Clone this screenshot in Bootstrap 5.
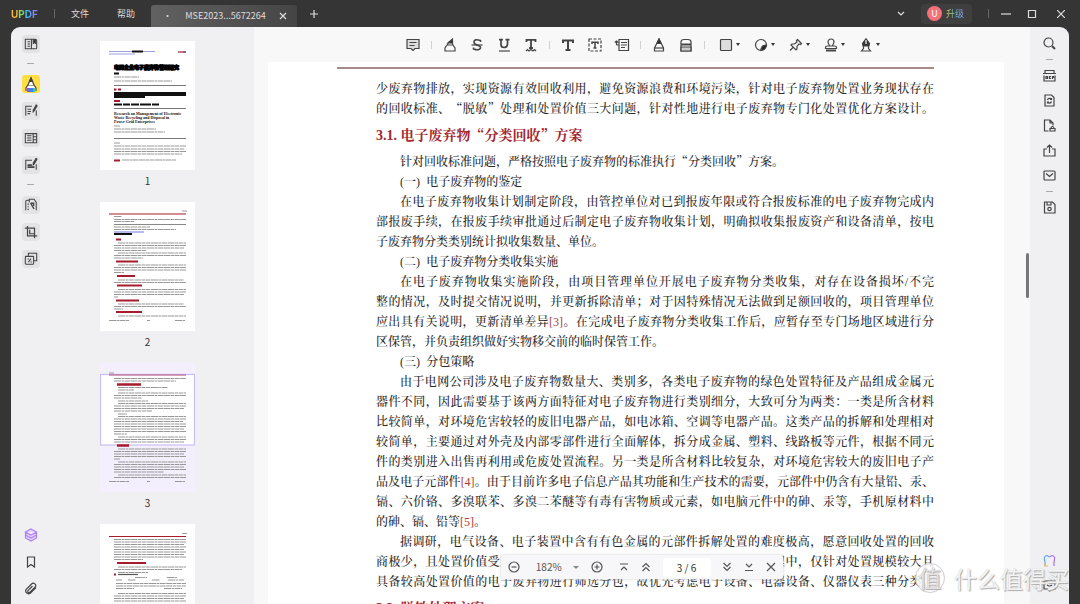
<!DOCTYPE html>
<html lang="zh-CN">
<head>
<meta charset="utf-8">
<meta name="viewport" content="width=device-width, initial-scale=1">
<title>UPDF</title>
<link href="https://cdn.jsdelivr.net/npm/bootstrap@5.3.0/dist/css/bootstrap.min.css" rel="stylesheet">
<script src="https://cdn.jsdelivr.net/npm/bootstrap@5.3.0/dist/js/bootstrap.bundle.min.js" defer></script>
<style>
body{height:100vh;background:#363536;font:9px/14px "Noto Sans CJK SC",sans-serif;color:#444;overflow:hidden}
button{background:none;border:0;padding:0;color:inherit;display:flex;align-items:center;justify-content:center;flex:none}
svg{display:block;flex:none;fill:none;stroke:currentColor;stroke-width:1.2}
.topbar{height:27px;color:#ddd;padding-left:11px;padding-right:11px}
.brand{font:bold 10px/14px Inter,sans-serif;background:linear-gradient(90deg,#ffb73a 15%,#7ed957 38%,#45b8f5 60%,#a06bf5);-webkit-background-clip:text;background-clip:text;color:transparent;text-decoration:none}
.vline{width:1px;height:9px;background:#666}
.doc-tab{width:146px;height:22px;background:linear-gradient(90deg,#626162,#464546);border-radius:3px 3px 0 0;padding:0 10px 0 12px}
.upgrade{background:#403f40;border-radius:4px;height:20px;padding:0 8px 0 6px;gap:4px}
.avatar-dot{width:15px;height:15px;border-radius:50%;background:#f4717a;color:#fff;line-height:15px}
.upgrade-label{background:linear-gradient(90deg,#e2c65a,#69c9b3 45%,#5fb4f5 70%,#b69bf5);-webkit-background-clip:text;background-clip:text;color:transparent}
.shell{margin:0 11px;background:#f0eff1;border-radius:9px 9px 0 0;min-height:0}
.rail{width:39px;padding-top:3px;padding-bottom:2px}
.rail button{width:27px;height:27px}
.rail hr{width:7px;margin:6px 0;border-top:1px solid #aaa;opacity:1;height:0}
.tile{background:#e3e2e4;border-radius:4px;padding:2px}
.tile-on{background:#ffdf43;border-radius:3px}
.rail-r button{height:25px}
.rail-r{padding-top:4px}
.rail-r hr{margin:3px 0}
.thumbs{width:204px;padding:14px 0 0 50px;overflow:hidden}
.thumbs figure{width:95px;margin:0}
.thumbs figcaption{height:32px;line-height:22px;font-size:10px;text-align:center;color:#333}
.thumbs svg{background:#fff;width:95px;height:129px}
.row-text{stroke:#999;stroke-width:1;stroke-dasharray:7 .5 3 .5 5 .5}
.ink{stroke:#111}.red{stroke:#a51d2d}
.viewer{background:#f8f8f8;min-width:0}
.tools{height:35px;color:#444}
.tools button{width:27px;height:27px}
.tools .drop{width:35px;gap:3px;padding-left:5px}
.tools .drop::after{content:"";border:2px solid transparent;border-top:3px solid #333;border-bottom:0}
.tools i{width:10px;height:8px;background:linear-gradient(#d2d2d2,#d2d2d2) center/1px 8px no-repeat}
.sheet{background:#fff;margin:0 26px 0 14px;padding:5px 70px 0 69px;overflow:hidden;min-height:0;color:#2a2a2a}
.sheet header{border-top:2px solid #a98a8a;margin-bottom:9px}
.prose{margin-left:39px;font:500 12px/20px "Noto Serif CJK SC","Noto Sans CJK SC",serif}
.prose p{margin:0}
.prose p span{display:block;text-align:justify;text-align-last:justify}
.prose .ind{padding-left:24px}
.prose p .end{text-align-last:left}
.prose h2{font:bold 14px/20px "Noto Serif CJK SC","Noto Sans CJK SC",serif;color:#a3272f;margin:6px 0 7px}
.prose b,.prose a{font-family:"Liberation Serif",serif;text-decoration:none;line-height:1}
.prose p b{font-weight:400}
.prose a{color:#b13a3a}
.thumb-scroll{right:1px;top:226px;width:3px;height:45px;border-radius:2px;background:#777}
.pager{left:50%;bottom:25px;transform:translateX(-50%);width:282px;height:24px;background:#f7f6f8;border-radius:3px;box-shadow:0 0 3px #ccc;padding:0 7px;color:#555;font-size:10px}
.pager input{width:48px;height:19px;border:0;border-radius:3px;background:#fff;text-align:center;font-size:10px;color:#333;padding:0}
.caret{border:3px solid transparent;border-top:3px solid #888;border-bottom:0}
.mark-wm{right:11px;bottom:9px;gap:9px;color:rgba(255,255,255,.85);font-size:23px;line-height:34px;text-shadow:1px 1px 1px #aaa,0 0 1px #bbb;pointer-events:none}
.mark-wm span:first-child{width:30px;height:30px;border-radius:50%;border:1px solid #ccc;background:rgba(255,255,255,.8);line-height:27px;text-align:center;color:#e4e0e2}
</style>
</head>
<body class="d-flex flex-column">
<nav class="topbar d-flex align-items-center flex-shrink-0">
  <a class="brand" href="#">UPDF</a><span class="vline ms-3"></span>
  <button class="ms-3">文件</button><button class="ms-4 ps-1">帮助</button>
  <div class="doc-tab d-flex align-items-center justify-content-between align-self-end ms-3"><span>•</span><span>MSE2023...5672264</span>
    <button aria-label="关闭标签"><svg width="8" height="8" viewBox="0 0 8 8" stroke-width="1"><path d="M1 1l6 6M7 1L1 7"/></svg></button></div>
  <button class="ms-2 ps-1" aria-label="新建标签"><svg width="10" height="10" viewBox="0 0 10 10"><path d="M5 1v8M1 5h8"/></svg></button>
  <div class="d-flex align-items-center ms-auto">
    <button class="me-3" aria-label="标签列表"><svg width="8" height="8" viewBox="0 0 8 8"><path d="M1 2l3 3 3-3"/></svg></button>
    <button class="upgrade"><span class="avatar-dot">U</span><span class="upgrade-label">升级</span></button>
    <span class="vline ms-3 me-2"></span>
    <button class="ms-1" aria-label="最小化"><svg width="10" height="10" viewBox="0 0 10 10"><path d="M0 5h10"/></svg></button>
    <button class="ms-3" aria-label="最大化"><svg width="10" height="10" viewBox="0 0 10 10"><path d="M1.500 1.500h7v7h-7z"/></svg></button>
    <button class="ms-3 ps-1 me-1" aria-label="关闭"><svg width="8" height="8" viewBox="0 0 8 8"><path d="M0 0l8 8M8 0L0 8"/></svg></button>
  </div>
</nav>
<main class="shell d-flex flex-grow-1">
  <aside class="rail d-flex flex-column align-items-center flex-shrink-0">
    <button aria-label="阅读"><svg class="tile" width="18" height="18" viewBox="0 0 16 16"><path d="M1.500 2.500h11q2 0 2 2v8q0 1-1 1h-12zM4 5.500h3M4 8h3M4 10.500h3M8.500 3v10"/><path d="M10.500 2.500v5l1.500-1 1.500 1v-5" fill="#333"/></svg></button>
    <hr>
    <button aria-label="注释"><svg class="tile-on" width="18" height="18" viewBox="0 0 18 18"><path d="M4 16v-3l2-3h6l2 3v3" fill="#fff"/><path d="M6 10l3-7 3 7" fill="#fff"/><path d="M7.500 6.500L9 3l1.500 3.500z" fill="#333"/><path d="M5 13h2v4H5z" fill="#a44de0" stroke="none"/><path d="M7 13h4v4H7z" fill="#3585ee" stroke="none"/><path d="M11 13h2v4h-2z" fill="#39c6a2" stroke="none"/></svg></button>
    <button aria-label="编辑"><svg class="tile" width="18" height="18" viewBox="0 0 16 16"><path d="M14 7v6.500M9 2.500H2v11M4 6h4M4 8.500h4M4 11h3"/><path d="M10.500 9V7L14 1l1 1-3.500 6z" fill="#333"/></svg></button>
    <button aria-label="页面"><svg class="tile" width="18" height="18" viewBox="0 0 16 16"><path d="M1.500 3h9v10.500h-9zM10.500 3h4v10.500h-4M3.500 5.500h5M3.500 8h5M3.500 10.500h5M10.500 6.500h4M10.500 10h4"/></svg></button>
    <button aria-label="表单"><svg class="tile" width="18" height="18" viewBox="0 0 16 16"><path d="M14 7v6.500M9 2.500H2v11"/><path d="M4 10.500h8M4 8h5" stroke-width="2"/><path d="M10.500 8V6L14 0l1 1-3.500 6z" fill="#333"/></svg></button>
    <hr>
    <button aria-label="转换"><svg class="tile" width="18" height="18" viewBox="0 0 16 16"><path d="M2 14V4q0-1.500 1.500-1.500H6M6 5V1.500h5.500L14 5v9M4 7h1.500M4 10h1.500M4 13h1.500"/><path d="M7.500 6H11v3M7.500 6l4 6.500" stroke-width="1.600"/></svg></button>
    <button aria-label="裁剪"><svg class="tile" width="18" height="18" viewBox="0 0 16 16"><path d="M1 3.500h11V15M4 1v11.500h11M6.500 5.500v4.500H12" stroke-width="1.400"/></svg></button>
    <button aria-label="批处理"><svg class="tile" width="18" height="18" viewBox="0 0 16 16"><path d="M5 5V1.500h9.500V10H11"/><rect x="1.500" y="5" width="9.500" height="9" rx="1"/><path d="M4 8h1.500M5 11.500l3-4M7.500 11.500H9"/></svg></button>
    <button class="mt-auto" aria-label="图层"><svg style="color:#ac84ee" width="14" height="14" viewBox="0 0 14 14"><path d="M7 1l5.500 3L7 7 1.500 4zM1.500 4v3L7 10l5.500-3V4M1.500 7v3L7 13l5.500-3V7" fill="#e2d3ff"/></svg></button>
    <button aria-label="书签"><svg width="12" height="12" viewBox="0 0 12 12"><path d="M2.500 1h7v10L6 8.500 2.500 11z"/></svg></button>
    <button aria-label="附件"><svg width="14" height="14" viewBox="0 0 14 14"><path d="M12 5.500l-6 6a3 3 0 01-4-4l5.500-5.500a2.300 2.300 0 013.500 3.200l-5 5a1.200 1.200 0 01-2-1.500L8.500 4"/></svg></button>
  </aside>
  <aside class="thumbs flex-shrink-0">
    <figure><svg viewBox="0 0 95 129">
      <path d="M9 10.500h46M9 13h26" stroke="#9ba0dd"/><path class="ink" d="M32 10.500h11" stroke-width="2"/><path class="red" d="M78 11h5"/><path class="ink" d="M83 11h3"/>
      <text x="14" y="28" font-size="5" font-weight="900" fill="#000" stroke="#000" stroke-width="1" font-family="Noto Sans CJK SC">电网企业电子废弃物管理研究</text>
      <path class="ink" stroke-width="2" d="M14 32.500h5M14 63.500h8m1 0h7m1 0h8m1 0h11m1 0h7"/><path class="row-text" d="M14 36h25M14 40h58M14 85h6M14 88h42M14 91h51M14 105h72M14 108h70M14 110.500h72M14 113h68M22 119h54M14 102h6"/>
      <path d="M14 44.500h72M14 67.500h72M14 97.500h72" stroke="#777"/><path class="red" stroke-width="2" d="M14 48.500h2.500m1.500 0h3M14 60h6M14 119.500h6"/><path class="ink" d="M14 53h72" stroke-width="4"/><path class="ink" d="M14 56h31" stroke-width="2"/>
      <g font-family="Liberation Serif" font-weight="bold" font-size="4" fill="#111" stroke="none"><text x="14" y="73.500">Research on Management of Electronic</text><text x="14" y="77.500">Waste Recycling and Disposal in</text><text x="14" y="81.500">Power Grid Enterprises</text></g>
    </svg><figcaption>1</figcaption></figure>
    <figure><svg viewBox="0 0 95 129">
      <path class="red" d="M9 12h77"/><path class="row-text" d="M82 9h5M14 14.500h8M14 17.500h72M14 19.500h20M14 25h36M14 27.500h62M18 41h68M14 43.500h72M14 46h70M14 48.500h32M18 51h68M14 53.500h72M14 56h29M18 63h68M14 65.500h72M14 68h72M14 70.500h10M18 78h66M14 80.500h72M18 87.500h68M14 90h72M14 92.500h70M14 95h4M18 102h66M14 104.500h72M14 107h9M18 114h68M9 118.500h20m18 0h3m25 0h10"/>
      <path d="M14 22.500h72" stroke="#888"/><path d="M14 30h30" stroke="#8d8de0"/><path class="ink" d="M14 32h18" stroke-width="2"/><path class="red" stroke-width="2" d="M16 37.500h5M16 59.500h22M17 74h18M17 83.500h25M16 98.500h23M16 110h26"/>
    </svg><figcaption>2</figcaption></figure>
    <figure><svg viewBox="0 0 95 129"><rect width="95" height="129" fill="#f4effd" stroke="none"/><rect x=".5" y="11.500" width="94" height="70.500" fill="#fff" stroke="#c9bdf5"/>
      <path d="M9 12h77" stroke="#b34d76"/><path class="row-text" d="M9 10h5M14 15.500h72M14 18h62M18 24.500h50M18 27h16M18 30h68M14 32.500h72M14 35h28M18 38h30M18 40.500h68M14 43h72M14 45.500h70M14 48h38M18 51h9M18 53.500h68M14 56h72M14 58.500h69M14 61h72M14 63.500h72M14 66h70M14 68.500h72M14 71h13M18 74h68M14 76.500h72M14 79h70M18 86h68M14 88.500h72M14 91h70M14 93.500h72M14 96h6M18 99h68M14 101.500h72M14 104h70M14 106.500h72M14 109h50M18 112h68M14 114.500h72M9 118.500h20m18 0h3m25 0h10"/><path class="red" stroke-width="2.500" d="M17 21.500h24M17 82.500h12"/>
    </svg><figcaption>3</figcaption></figure>
    <figure><svg viewBox="0 0 95 129"><path class="red" d="M9 12.500h77"/><path class="row-text" d="M82 9.500h5M14 15.500h72M14 18h72M14 20.500h70M14 23h72M14 25.500h70M14 28h72M14 30.500h70M14 33h72M14 35.500h29M18 43h68M14 45.500h68M18 48.500h30M35 53.500h12m20 0h10M16 56h6m6 0h8m16 0h8m8 0h16M16 59.500h70M16 62h70M16 64.500h18m30 0h18M18 69.500h68M14 72h72M14 74.500h70M14 77h72"/><path class="red" stroke-width="2" d="M17 39h29M14 50.500h2"/><path d="M18 50.500h20" stroke="#555"/></svg></figure>
  </aside>
  <section class="viewer position-relative d-flex flex-column flex-grow-1">
    <div class="tools d-flex align-items-center justify-content-center flex-shrink-0">
      <button aria-label="批注"><svg width="14" height="14" viewBox="0 0 14 14"><path d="M1 1.500h12v9H9L7 12.500 5 10.500H1z" fill="#ddd"/><path d="M3.500 4.500h7M3.500 7.500h5"/></svg></button><i></i>
      <button aria-label="高亮"><svg width="14" height="14" viewBox="0 0 14 14"><path d="M2 13v-3l2-3h6l2 3v3zM4 7l2-3h3l1 3"/><path d="M5 5l4.500-4v4z" fill="#222"/></svg></button>
      <button aria-label="删除线"><svg width="14" height="14" viewBox="0 0 14 14"><path d="M10.500 4V2.500Q4 .5 4 4q0 2 3 3 4 1 3.500 3-1 3-7 1V9.500" stroke-width="1.600"/><path d="M1.500 7h11"/></svg></button>
      <button aria-label="下划线"><svg width="14" height="14" viewBox="0 0 14 14"><path d="M2 1.700h4M8.500 1.700h4M4 2v4.500q0 3 3 3t3.500-3V2" stroke-width="1.700"/><path d="M2 13h11"/></svg></button>
      <button aria-label="波浪线"><svg width="14" height="14" viewBox="0 0 14 14"><path d="M2.500 4V1.800h9V4M7 2v8M5 10h4" stroke-width="1.800"/><path d="M2 13l1.500-1.500L5 13l2-1.500L9 13l1.500-1.500L12 13"/></svg></button><i></i>
      <button aria-label="文本"><svg width="14" height="14" viewBox="0 0 14 14"><path d="M2 5V2.500h10V5M7 2.500V12M4.500 12h5" stroke-width="2"/></svg></button>
      <button aria-label="文本框"><svg width="14" height="14" viewBox="0 0 14 14"><rect x="1" y="1" width="12" height="12" stroke-dasharray="3 1.500"/><path d="M4 6V4.300h6V6M7 4.500V10M5.500 10h3" stroke-width="1.500"/></svg></button>
      <button aria-label="标注"><svg width="16" height="14" viewBox="0 0 16 14"><path d="M5 1.500h9.500v11H5zM7 4.500h6M7 7h6M7 9.500h4M2.500 7V3M.8 4.500L2.500 3l1.700 1.500M2.500 7H5"/></svg></button><i></i>
      <button aria-label="铅笔"><svg width="14" height="14" viewBox="0 0 14 14"><path d="M2.500 13v-3L7 1l4.500 9v3z"/><path d="M5 5.500L7 1l2 4.500z" fill="#222"/><path d="M2.500 10h9"/></svg></button>
      <button aria-label="橡皮"><svg width="14" height="14" viewBox="0 0 14 14"><path d="M2 13V4q0-2.500 3-2.500h4Q12 1.500 12 4v9z"/><path d="M2 6.500h10" stroke-width="2"/><path d="M2 9h10v4H2z" fill="#ccc"/></svg></button><i></i>
      <button class="drop" aria-label="形状"><svg width="14" height="14" viewBox="0 0 14 14"><rect x="1.500" y="1.500" width="11" height="11" rx="1" fill="#ddd"/></svg></button>
      <button class="drop" aria-label="贴纸"><svg width="14" height="14" viewBox="0 0 14 14"><path d="M7 12.500A5.500 5.500 0 1112.500 7q-5 0-5.500 5.500z"/><path d="M7 12.500Q7.500 7 12.500 7q-.5 5-5.500 5.500z" fill="#222"/></svg></button>
      <button class="drop" aria-label="图钉"><svg width="14" height="14" viewBox="0 0 14 14"><path d="M8.500 1.500l4 4-1 1-1.500-.5-2 2.500v2.500l-1 1-5-5 1-1h2.500L8 4l-.5-1.500zM4 9.500L1 12.500"/></svg></button>
      <button class="drop" aria-label="图章"><svg width="14" height="14" viewBox="0 0 14 14"><path d="M5.500 7.500Q4 5 4 4a3 3 0 016 0q0 1-1.500 3.500M1.500 10.500v-1q0-1.500 2-1.500h7q2 0 2 1.500v1z"/><path d="M2 12.500h10" stroke-width="2"/></svg></button>
      <button class="drop" aria-label="签名"><svg width="14" height="14" viewBox="0 0 14 14"><path d="M4 8L3.500 5.500 7 .8l3.500 4.700L10 8z" fill="#333"/><path d="M7 2v4" stroke="#fff"/><path d="M4.500 8v2.500L2.500 13h9l-2-2.500V8"/></svg></button>
    </div>
    <article class="sheet flex-grow-1">
      <header></header>
      <div class="prose">
        <p><span>少废弃物排放，实现资源有效回收利用，避免资源浪费和环境污染，针对电子废弃物处置业务现状存在</span><span>的回收标准、“脱敏”处理和处置价值三大问题，针对性地进行电子废弃物专门化处置优化方案设计。</span></p>
        <h2><b>3.1.</b>&nbsp;电子废弃物“分类回收”方案</h2>
        <p><span class="ind end">针对回收标准问题，严格按照电子废弃物的标准执行“分类回收”方案。</span></p>
        <p><span class="ind end"><b>(</b>一<b>)</b>&nbsp; 电子废弃物的鉴定</span></p>
        <p><span class="ind">在电子废弃物收集计划制定阶段，由管控单位对已到报废年限或符合报废标准的电子废弃物完成内</span><span>部报废手续，在报废手续审批通过后制定电子废弃物收集计划，明确拟收集报废资产和设备清单，按电</span><span class="end">子废弃物分类类别统计拟收集数量、单位。</span></p>
        <p><span class="ind end"><b>(</b>二<b>)</b>&nbsp; 电子废弃物分类收集实施</span></p>
        <p><span class="ind">在电子废弃物收集实施阶段，由项目管理单位开展电子废弃物分类收集，对存在设备损坏<b>/</b>不完</span><span>整的情况，及时提交情况说明，并更新拆除清单；对于因特殊情况无法做到足额回收的，项目管理单位</span><span>应出具有关说明，更新清单差异<a href="#">[3]</a>。在完成电子废弃物分类收集工作后，应暂存至专门场地区域进行分</span><span class="end">区保管，并负责组织做好实物移交前的临时保管工作。</span></p>
        <p><span class="ind end"><b>(</b>三<b>)</b>&nbsp; 分包策略</span></p>
        <p><span class="ind">由于电网公司涉及电子废弃物数量大、类别多，各类电子废弃物的绿色处置特征及产品组成金属元</span><span>器件不同，因此需要基于该两方面特征对电子废弃物进行类别细分，大致可分为两类：一类是所含材料</span><span>比较简单，对环境危害较轻的废旧电器产品，如电冰箱、空调等电器产品。这类产品的拆解和处理相对</span><span>较简单，主要通过对外壳及内部零部件进行全面解体，拆分成金属、塑料、线路板等元件，根据不同元</span><span>件的类别进入出售再利用或危废处置流程。另一类是所含材料比较复杂，对环境危害较大的废旧电子产</span><span>品及电子元部件<a href="#">[4]</a>。由于目前许多电子信息产品其功能和生产技术的需要，元部件中仍含有大量铅、汞、</span><span>镉、六价铬、多溴联苯、多溴二苯醚等有毒有害物质或元素，如电脑元件中的砷、汞等，手机原材料中</span><span class="end">的砷、镉、铅等<a href="#">[5]</a>。</span></p>
        <p><span class="ind">据调研，电气设备、电子装置中含有有色金属的元部件拆解处置的难度极高，愿意回收处置的回收</span><span>商极少，且处置价值受到较大影响。因此在电子废弃物分类回收处置的过程中，仅针对处置规模较大且</span><span>具备较高处置价值的电子废弃物进行筛选分包，故优先考虑电子设备、电器设备、仪器仪表三种分类。</span></p>
        <h2><b>3.2.</b>&nbsp;脱敏处理方案</h2>
      </div>
    </article>
    <div class="thumb-scroll position-absolute"></div>
    <div class="pager position-absolute d-flex align-items-center justify-content-between">
      <button aria-label="缩小"><svg width="12" height="12" viewBox="0 0 12 12"><circle cx="6" cy="6" r="5"/><path d="M3.500 6h5"/></svg></button>
      <button class="ms-1">182%</button><span class="caret"></span>
      <button aria-label="放大"><svg width="12" height="12" viewBox="0 0 12 12"><circle cx="6" cy="6" r="5"/><path d="M3.500 6h5M6 3.500v5"/></svg></button>
      <button class="ms-1" aria-label="首页"><svg width="10" height="10" viewBox="0 0 10 10"><path d="M1 2h8M2 8l3-3 3 3"/></svg></button>
      <button aria-label="上一页"><svg width="10" height="10" viewBox="0 0 10 10"><path d="M1.500 5L5 1.500 8.500 5M1.500 9L5 5.500 8.500 9"/></svg></button>
      <input value="3 / 6" aria-label="页码">
      <button aria-label="下一页"><svg width="10" height="10" viewBox="0 0 10 10"><path d="M1.500 1L5 4.500 8.500 1M1.500 5L5 8.500 8.500 5"/></svg></button>
      <button aria-label="末页"><svg width="10" height="10" viewBox="0 0 10 10"><path d="M1 8.500h8M2 2l3 3 3-3"/></svg></button>
      <button aria-label="关闭工具条"><svg width="10" height="10" viewBox="0 0 10 10"><path d="M1 1l8 8M9 1L1 9"/></svg></button>
    </div>
  </section>
  <aside class="rail rail-r d-flex flex-column align-items-center flex-shrink-0">
    <button aria-label="搜索"><svg width="13" height="13" viewBox="0 0 13 13"><circle cx="5.500" cy="5.500" r="4.500"/><path d="M9 9l3 3" stroke-width="2"/></svg></button><hr>
    <button aria-label="OCR"><svg width="13" height="13" viewBox="0 0 13 13"><path d="M2 4V1.500h9V4M0 4.500h13M1 6.500V12h11V6.500M3 7.500h1.500v2H3zM8 7.500H6.500v2H8M9.500 10V7.500h1v1.500"/></svg></button>
    <button aria-label="转换文件"><svg width="13" height="13" viewBox="0 0 13 13"><path d="M2 1h6.500L11 3.500V12H2zM4.500 6a2.200 2.200 0 014-.5M8.500 7.500a2.200 2.200 0 01-4 .5M8.500 4v1.500H7M4.500 9.500V8H6"/></svg></button>
    <button aria-label="保护"><svg width="13" height="13" viewBox="0 0 13 13"><path d="M5.500 12H1.500V1H7l3 3v2.500M7 1v3h3M7 9.500h5V12H7zM8 9.500q0-2 1.500-2t1.500 2"/></svg></button>
    <button aria-label="分享"><svg width="13" height="13" viewBox="0 0 13 13"><path d="M4 5H1v7h11V5H9M6.500 9V1M4 3.500L6.500 1 9 3.500"/></svg></button>
    <button aria-label="邮件"><svg width="13" height="13" viewBox="0 0 13 13"><rect x="1" y="2" width="11" height="9" rx="1"/><path d="M3 4.500l3.500 3 3.500-3"/></svg></button><hr>
    <button aria-label="保存"><svg width="13" height="13" viewBox="0 0 13 13"><path d="M1.500 1h8L12 3.500V12H1.500zM4 1v3h4V1"/><circle cx="6.500" cy="8" r="1.700"/></svg></button>
    <button class="mt-auto" aria-label="AI 助手"><svg width="13" height="13" viewBox="0 0 13 13" stroke-width="2"><path d="M2 12V8Q0 2 4 1.500L6.500 3" stroke="#57a6f5"/><path d="M6.500 3L9 1.500Q13 2 11 8v4" stroke="#a772f2"/><path d="M2 9v3h3" stroke="#e9bd57"/></svg></button>
    <button class="mb-1" aria-label="消息"><svg width="13" height="13" viewBox="0 0 13 13"><path d="M1 2h11v8H8.500l-2 2-2-2H1zM4 6q2.500 2 5 0"/></svg></button>
  </aside>
</main>
<div class="mark-wm position-absolute d-flex align-items-center"><span>值</span><span>什么值得买</span></div>
</body>
</html>
